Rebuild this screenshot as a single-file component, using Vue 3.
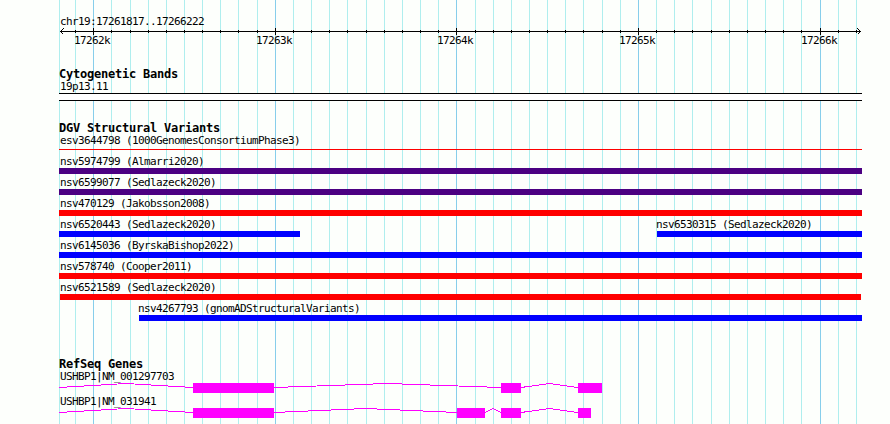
<template>
    <div class="browser">
        <svg class="grid" width="803" height="424" shape-rendering="crispEdges">
            <rect v-for="x in gridLines" :key="x" :x="x" y="0" width="1" height="424"
                :class="{ major: majorTicks.includes(x) }" />
        </svg>

        <section class="scale">
            <div class="label">chr19:17261817..17266222</div>
            <svg class="axis" width="803" height="18" shape-rendering="crispEdges">
                <rect x="1" y="3" width="801" height="1" />
                <rect v-for="x in ticks" :key="x" :x="x" :y="majorTicks.includes(x) ? 0 : 2" width="1"
                    :height="majorTicks.includes(x) ? 7 : 3" />
                <path d="M4.5 0.5L1.5 3.5L4.5 6.5M798.5 0.5L801.5 3.5L798.5 6.5" />
                <text v-for="(x, i) in majorTicks" :key="'t' + x" :x="x - 19" y="16">{{ 17262 + i }}k</text>
            </svg>
        </section>

        <section class="cytobands">
            <h2>Cytogenetic Bands</h2>
            <div class="label">19p13.11</div>
            <div class="band"></div>
        </section>

        <section class="variants">
            <h2>DGV Structural Variants</h2>
            <div v-for="(row, i) in variantRows" :key="i" class="row">
                <div v-for="v in row" :key="v.name" class="variant"
                    :style="{ width: v.width + 'px', marginLeft: v.offset + 'px' }">
                    <div class="label" :class="{ inner: v.offset > 1, shifted: v.offset === 1 }">{{ v.name }} ({{ v.study }})</div>
                    <div class="bar" :class="v.type"></div>
                </div>
            </div>
        </section>

        <section class="genes">
            <h2>RefSeq Genes</h2>
            <div v-for="gene in genes" :key="gene.name" class="gene">
                <div class="label">{{ gene.name }}</div>
                <svg width="803" height="10" shape-rendering="crispEdges">
                    <polyline :points="introns(gene.exons)" />
                    <rect v-for="[start, end] in gene.exons" :key="start" :x="start" y="0" :width="end - start"
                        height="10" />
                </svg>
            </div>
        </section>
    </div>
</template>

<script setup>
const majorTicks = [34, 216, 397, 579, 761]

const ticks = [
    16, 34, 52, 71, 89, 107, 125, 143, 161, 179, 198,
    216, 234, 252, 270, 288, 307, 325, 343, 361, 379,
    397, 416, 434, 452, 470, 488, 506, 524, 543, 561,
    579, 597, 615, 633, 652, 670, 688, 706, 724, 742,
    761, 779, 797,
]
const gridLines = [0, ...ticks]

// offset is the gap to the previous feature on the same row
const variantRows = [
    [{ name: 'esv3644798', study: '1000GenomesConsortiumPhase3', type: 'thin', offset: 0, width: 803 }],
    [{ name: 'nsv5974799', study: 'Almarri2020', type: 'complex', offset: 0, width: 803 }],
    [{ name: 'nsv6599077', study: 'Sedlazeck2020', type: 'complex', offset: 0, width: 803 }],
    [{ name: 'nsv470129', study: 'Jakobsson2008', type: 'loss', offset: 0, width: 803 }],
    [
        { name: 'nsv6520443', study: 'Sedlazeck2020', type: 'gain', offset: 0, width: 241 },
        { name: 'nsv6530315', study: 'Sedlazeck2020', type: 'gain', offset: 357, width: 205 },
    ],
    [{ name: 'nsv6145036', study: 'ByrskaBishop2022', type: 'gain', offset: 0, width: 803 }],
    [{ name: 'nsv578740', study: 'Cooper2011', type: 'loss', offset: 0, width: 803 }],
    [{ name: 'nsv6521589', study: 'Sedlazeck2020', type: 'loss', offset: 1, width: 801 }],
    [{ name: 'nsv4267793', study: 'gnomADStructuralVariants', type: 'gain', offset: 80, width: 723 }],
]

const genes = [
    { name: 'USHBP1|NM_001297703', exons: [[134, 215], [442, 462], [519, 543]] },
    { name: 'USHBP1|NM_031941', exons: [[134, 215], [398, 426], [442, 462], [519, 532]] },
]

// hat-shaped connectors between the exons
const introns = (exons) => {
    const points = []
    let from = 0
    for (const [start, end] of exons) {
        points.push(`${from},4.5`, `${(from + start) / 2},0.5`, `${start},4.5`)
        from = end
    }
    return points.join(' ')
}
</script>

<style>
body {
    background: #fdfffc;
    overflow: hidden;
}
</style>

<style scoped>
.browser {
    position: relative;
    box-sizing: border-box;
    width: 890px;
    height: 424px;
    padding: 15px 28px 0 59px;
    overflow: hidden;
    color: #000;
    font-family: "DejaVu Sans Mono", "Liberation Mono", monospace;
    font-size: 11px;
    letter-spacing: -0.622px;
}

svg {
    display: block;
}

.grid {
    position: absolute;
    top: 0;
    left: 59px;
    fill: #afeeee;
}

.grid .major {
    fill: #87ceeb;
}

section {
    position: relative;
}

h2 {
    margin: 0;
    height: 12px;
    font-size: 12px;
    line-height: 12px;
    font-weight: bold;
    letter-spacing: -0.224px;
}

.label {
    height: 13px;
    padding-left: 1px;
    line-height: 14px;
    white-space: nowrap;
}

.label.inner {
    padding-left: 0;
    margin-left: -1px;
}

.label.shifted {
    padding-left: 0;
}

.scale {
    margin-bottom: 22px;
}

.axis path {
    fill: none;
    stroke: #000;
}

.cytobands {
    margin-bottom: 21px;
}

.band {
    box-sizing: border-box;
    height: 8px;
    border: solid #000;
    border-width: 1px 0;
    background: #fff;
}

.variants {
    margin-bottom: 35px;
}

.row {
    display: flex;
    height: 21px;
}

.variant {
    flex: none;
}

.bar {
    height: 6px;
}

.bar.thin {
    height: 1px;
    margin-top: 2px;
    background: #f00;
}

.bar.complex {
    background: #4b0082;
}

.bar.loss {
    background: #f00;
}

.bar.gain {
    background: #00f;
}

.gene {
    height: 25px;
}

.gene svg {
    fill: #f0f;
}

.gene polyline {
    fill: none;
    stroke: #f0f;
}
</style>
